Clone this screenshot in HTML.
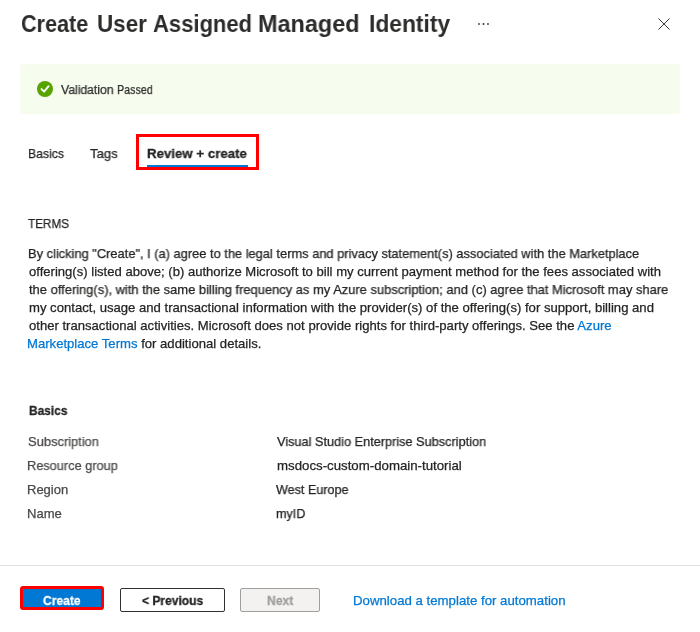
<!DOCTYPE html>
<html><head><meta charset="utf-8">
<style>
html,body{margin:0;padding:0;background:#fff;}
body{width:700px;height:632px;position:relative;overflow:hidden;font-family:"Liberation Sans",sans-serif;color:#323130;}
.a{position:absolute;white-space:nowrap;line-height:1;transform-origin:0 0;will-change:transform;}
.n{-webkit-text-stroke:0.25px currentColor;}
.b{font-weight:bold;-webkit-text-stroke:0.3px currentColor;}
.lk{color:#0078d4;}
.s{position:absolute;box-sizing:border-box;}
</style></head>
<body>
<svg style="position:absolute;left:470px;top:15px" width="30" height="15" viewBox="0 0 30 15"><rect x="8" y="8" width="2" height="2" fill="#7c7c7c"/><rect x="12.7" y="8" width="1.6" height="2" fill="#444"/><rect x="17" y="8" width="2" height="2" fill="#7c7c7c"/></svg>
<svg style="position:absolute;left:657px;top:17px" width="14" height="14" viewBox="0 0 14 14"><path d="M1.4 1.4L12.6 12.6M12.6 1.4L1.4 12.6" stroke="#3b3a39" stroke-width="1"/></svg>
<div class="s" style="left:20px;top:64px;width:660px;height:50px;background:#f7fdee;border-radius:2px;"></div>
<svg style="position:absolute;left:37px;top:81px" width="16" height="16" viewBox="0 0 16 16"><circle cx="8" cy="8" r="8" fill="#57a300"/><path d="M4.5 8.1L7.1 10.6L11.6 5.2" stroke="#fff" stroke-width="1.9" fill="none" stroke-linecap="round" stroke-linejoin="round"/></svg>
<div class="s" style="left:147px;top:165px;width:101px;height:2px;background:#0078d4;"></div>
<div class="s" style="left:136px;top:134px;width:123px;height:36px;border:3px solid #f00;"></div>
<div class="s" style="left:0;top:565px;width:700px;height:1px;background:#e1dfdd;"></div>
<div class="s" style="left:20px;top:586px;width:84px;height:24px;border:3px solid #f00;border-radius:3px;background:#0078d4;"></div>
<div class="s" style="left:120px;top:588px;width:105px;height:24px;border:1px solid #323130;border-radius:2px;background:#fff;"></div>
<div class="s" style="left:240px;top:588px;width:80px;height:24px;border:1px solid #a19f9d;border-radius:2px;background:#f3f2f1;"></div>

<div class="a" style="left:21.00px;top:12.00px;font-size:24px;color:#2d2c2b;font-weight:bold;transform:scaleX(0.9010);">Create</div>
<div class="a" style="left:96.77px;top:12.00px;font-size:24px;color:#2d2c2b;font-weight:bold;transform:scaleX(0.9341);">User</div>
<div class="a" style="left:152.90px;top:12.00px;font-size:24px;color:#2d2c2b;font-weight:bold;transform:scaleX(0.9174);">Assigned</div>
<div class="a" style="left:257.62px;top:12.00px;font-size:24px;color:#2d2c2b;font-weight:bold;transform:scaleX(0.9770);">Managed</div>
<div class="a" style="left:369.05px;top:12.00px;font-size:24px;color:#2d2c2b;font-weight:bold;transform:scaleX(0.9507);">Identity</div>
<div class="a n" style="left:61.30px;top:84.00px;font-size:12.5px;color:#2d2c2b;transform:scaleX(0.9737);">Validation</div>
<div class="a n" style="left:117.34px;top:84.00px;font-size:12.5px;color:#2d2c2b;transform:scaleX(0.8591);">Passed</div>
<div class="a n" style="left:28.20px;top:147.00px;font-size:13.5px;color:#252423;transform:scaleX(0.9049);">Basics</div>
<div class="a n" style="left:90.20px;top:147.00px;font-size:13.5px;color:#252423;transform:scaleX(0.9734);">Tags</div>
<div class="a b" style="left:147.10px;top:147.00px;font-size:13.5px;color:#252423;transform:scaleX(0.9816);">Review + create</div>
<div class="a n" style="left:28.30px;top:217.00px;font-size:13px;color:#252423;transform:scaleX(0.9034);">TERMS</div>
<div class="a n" style="left:27.51px;top:247.00px;font-size:13px;color:#252423;transform:scaleX(0.9885);">By clicking &quot;Create&quot;, I (a) agree to the legal terms and privacy statement(s) associated with the Marketplace</div>
<div class="a n" style="left:28.50px;top:265.00px;font-size:13px;color:#252423;transform:scaleX(1.0057);">offering(s) listed above; (b) authorize Microsoft to bill my current payment method for the fees associated with</div>
<div class="a n" style="left:28.50px;top:283.00px;font-size:13px;color:#252423;transform:scaleX(0.9933);">the offering(s), with the same billing frequency as my Azure subscription; and (c) agree that Microsoft may share</div>
<div class="a n" style="left:28.50px;top:301.00px;font-size:13px;color:#252423;transform:scaleX(1.0084);">my contact, usage and transactional information with the provider(s) of the offering(s) for support, billing and</div>
<div class="a n" style="left:28.50px;top:319.00px;font-size:13px;color:#252423;transform:scaleX(1.0069);">other transactional activities. Microsoft does not provide rights for third-party offerings. See the <span class="lk">Azure</span></div>
<div class="a n" style="left:27.49px;top:337.00px;font-size:13px;color:#252423;transform:scaleX(1.0084);"><span class="lk">Marketplace Terms</span> for additional details.</div>
<div class="a b" style="left:29.00px;top:404.00px;font-size:13px;color:#252423;transform:scaleX(0.9163);">Basics</div>
<div class="a n" style="left:28.40px;top:435.00px;font-size:13px;color:#4a4847;transform:scaleX(0.9915);">Subscription</div>
<div class="a n" style="left:27.42px;top:459.00px;font-size:13px;color:#4a4847;transform:scaleX(0.9817);">Resource group</div>
<div class="a n" style="left:27.41px;top:483.00px;font-size:13px;color:#4a4847;transform:scaleX(0.9908);">Region</div>
<div class="a n" style="left:27.40px;top:507.00px;font-size:13px;color:#4a4847;transform:scaleX(1.0046);">Name</div>
<div class="a n" style="left:276.50px;top:435.00px;font-size:13px;color:#252423;transform:scaleX(0.9788);">Visual Studio Enterprise Subscription</div>
<div class="a n" style="left:276.50px;top:459.00px;font-size:13px;color:#252423;transform:scaleX(1.0190);">msdocs-custom-domain-tutorial</div>
<div class="a n" style="left:276.40px;top:483.00px;font-size:13px;color:#252423;transform:scaleX(0.9668);">West Europe</div>
<div class="a n" style="left:276.40px;top:507.00px;font-size:13px;color:#252423;transform:scaleX(0.9686);">myID</div>
<div class="a b" style="left:43.30px;top:594.00px;font-size:13px;color:#ffffff;transform:scaleX(0.9270);">Create</div>
<div class="a b" style="left:142.20px;top:594.00px;font-size:13px;color:#252423;transform:scaleX(0.9243);">&lt; Previous</div>
<div class="a b" style="left:266.90px;top:594.00px;font-size:13px;color:#a19f9d;transform:scaleX(0.9359);">Next</div>
<div class="a n" style="left:352.58px;top:594.00px;font-size:13px;color:#0078d4;transform:scaleX(1.0178);">Download a template for automation</div>
</body></html>
